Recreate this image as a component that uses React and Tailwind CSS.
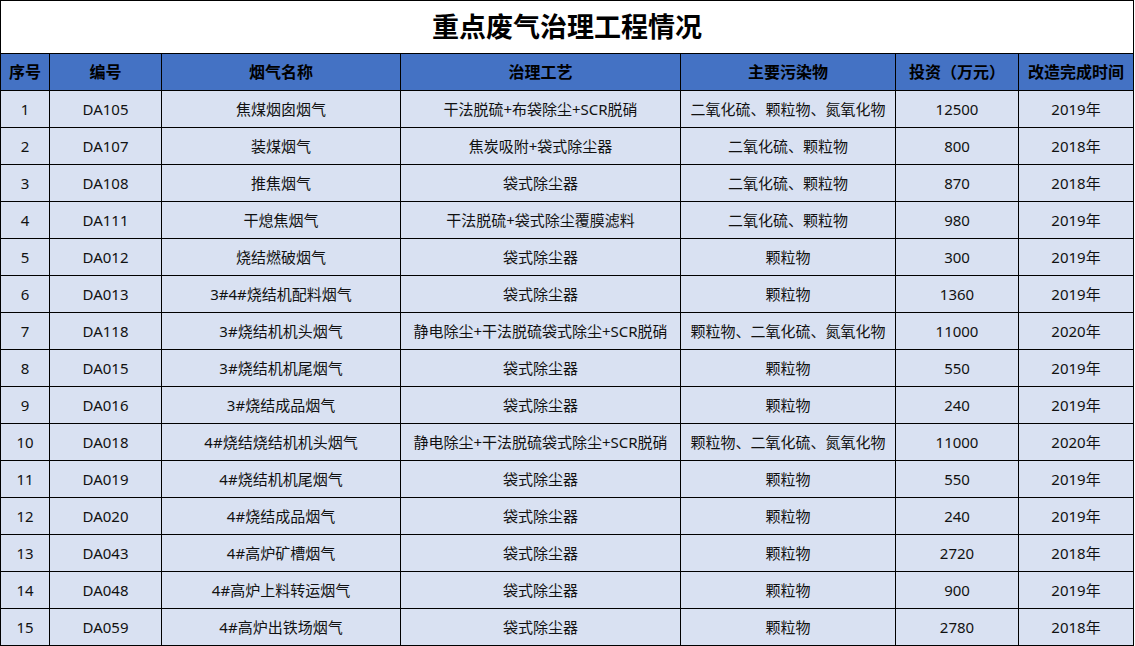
import React from "react";

const rows = [
  ["1", "DA105", "焦煤烟囱烟气", "干法脱硫+布袋除尘+SCR脱硝", "二氧化硫、颗粒物、氮氧化物", "12500", "2019年"],
  ["2", "DA107", "装煤烟气", "焦炭吸附+袋式除尘器", "二氧化硫、颗粒物", "800", "2018年"],
  ["3", "DA108", "推焦烟气", "袋式除尘器", "二氧化硫、颗粒物", "870", "2018年"],
  ["4", "DA111", "干熄焦烟气", "干法脱硫+袋式除尘覆膜滤料", "二氧化硫、颗粒物", "980", "2019年"],
  ["5", "DA012", "烧结燃破烟气", "袋式除尘器", "颗粒物", "300", "2019年"],
  ["6", "DA013", "3#4#烧结机配料烟气", "袋式除尘器", "颗粒物", "1360", "2019年"],
  ["7", "DA118", "3#烧结机机头烟气", "静电除尘+干法脱硫袋式除尘+SCR脱硝", "颗粒物、二氧化硫、氮氧化物", "11000", "2020年"],
  ["8", "DA015", "3#烧结机机尾烟气", "袋式除尘器", "颗粒物", "550", "2019年"],
  ["9", "DA016", "3#烧结成品烟气", "袋式除尘器", "颗粒物", "240", "2019年"],
  ["10", "DA018", "4#烧结烧结机机头烟气", "静电除尘+干法脱硫袋式除尘+SCR脱硝", "颗粒物、二氧化硫、氮氧化物", "11000", "2020年"],
  ["11", "DA019", "4#烧结机机尾烟气", "袋式除尘器", "颗粒物", "550", "2019年"],
  ["12", "DA020", "4#烧结成品烟气", "袋式除尘器", "颗粒物", "240", "2019年"],
  ["13", "DA043", "4#高炉矿槽烟气", "袋式除尘器", "颗粒物", "2720", "2018年"],
  ["14", "DA048", "4#高炉上料转运烟气", "袋式除尘器", "颗粒物", "900", "2019年"],
  ["15", "DA059", "4#高炉出铁场烟气", "袋式除尘器", "颗粒物", "2780", "2018年"],
];

const headers = ["序号", "编号", "烟气名称", "治理工艺", "主要污染物", "投资（万元）", "改造完成时间"];

export default function App() {
  return (
    <div
      className="w-[1135px] h-[646px] bg-white"
      style={{ fontFamily: '"Noto Sans", "Noto Sans CJK SC", sans-serif' }}
    >
      <div className="w-[1134px] bg-black p-px grid gap-px grid-cols-[48px_111px_238px_279px_214px_122px_114px] grid-rows-[52px_repeat(16,36px)]">
        <div className="col-span-7 bg-white flex items-center justify-center text-[27px] font-bold text-black">
          重点废气治理工程情况
        </div>
        {headers.map((h, i) => (
          <div key={i} className="bg-[#4472C4] flex items-center justify-center text-[16px] font-bold text-black whitespace-nowrap">
            {h}
          </div>
        ))}
        {rows.map((r, ri) =>
          r.map((c, ci) => (
            <div key={ri + "-" + ci} className="bg-[#D9E1F2] flex items-center justify-center text-[15px] text-[#111] whitespace-nowrap">
              {c}
            </div>
          ))
        )}
      </div>
    </div>
  );
}
